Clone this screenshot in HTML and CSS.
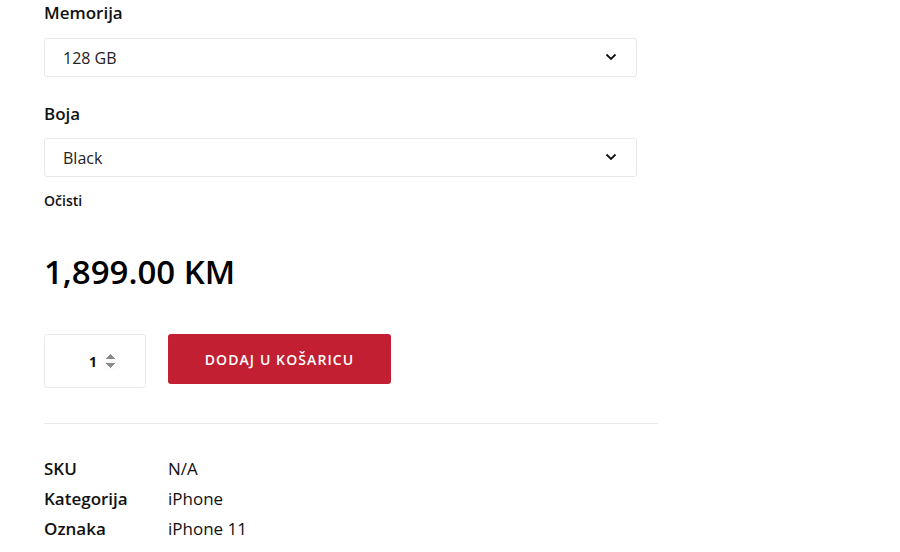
FILE: index.html
```html
<!DOCTYPE html>
<html lang="hr">
<head>
    <meta charset="UTF-8">
    <meta name="viewport" content="width=device-width, initial-scale=1.0">
    <title>iPhone 11</title>
    <link rel="stylesheet" href="styles.css">
</head>
<body>
    <div class="summary">
        <form class="variations-form">
            <div class="variation">
                <label for="memorija">Memorija</label>
                <div class="select-wrap">
                    <select id="memorija">
                        <option>128 GB</option>
                        <option>64 GB</option>
                        <option>256 GB</option>
                    </select>
                    <svg class="chevron" width="12" height="8" viewBox="0 0 12 8"><path d="M1.5 1.5L6 6l4.5-4.5" fill="none" stroke="#111" stroke-width="1.8"/></svg>
                </div>
            </div>
            <div class="variation">
                <label for="boja">Boja</label>
                <div class="select-wrap">
                    <select id="boja">
                        <option>Black</option>
                        <option>White</option>
                        <option>Red</option>
                    </select>
                    <svg class="chevron" width="12" height="8" viewBox="0 0 12 8"><path d="M1.5 1.5L6 6l4.5-4.5" fill="none" stroke="#111" stroke-width="1.8"/></svg>
                </div>
            </div>
            <a href="#" class="reset-link">Očisti</a>

            <div class="price">1,899.00 KM</div>

            <div class="cart-row">
                <div class="qty-box">
                    <input type="number" class="qty" value="1" min="1">
                </div>
                <button type="submit" class="add-to-cart">Dodaj u košaricu</button>
            </div>
        </form>

        <div class="product-meta">
            <div class="meta-row"><span class="meta-label">SKU</span><span>N/A</span></div>
            <div class="meta-row"><span class="meta-label">Kategorija</span><span>iPhone</span></div>
            <div class="meta-row"><span class="meta-label">Oznaka</span><span>iPhone 11</span></div>
        </div>
    </div>
</body>
</html>
```

FILE: styles.css
```css
body {
    font-family: "Open Sans", Arial, sans-serif;
    margin: 0;
    padding: 0;
    background-color: #fff;
    color: #111;
}

.summary {
    width: 614px;
    padding: 0 0 0 44px;
}

.variation label {
    display: block;
    font-size: 17px;
    font-weight: 600;
    line-height: 26px;
    margin: 0 0 12px;
}

.variation + .variation label {
    line-height: 25px;
}

.select-wrap {
    position: relative;
    width: 593px;
    margin-bottom: 24px;
}

.variation + .variation .select-wrap {
    margin-bottom: 12px;
}

select {
    -webkit-appearance: none;
    appearance: none;
    width: 100%;
    height: 39px;
    padding: 0 18px;
    border: 1px solid #e8e8e8;
    border-radius: 3px;
    background-color: #fff;
    font-family: inherit;
    font-size: 16px;
    color: #222;
}

.chevron {
    position: absolute;
    right: 20px;
    top: 15px;
    pointer-events: none;
}

.reset-link {
    display: block;
    font-size: 14px;
    font-weight: 600;
    color: #111;
    text-decoration: none;
    line-height: 24px;
}

.price {
    font-size: 33px;
    font-weight: 600;
    color: #000;
    margin-top: 37px;
    line-height: 44px;
}

.cart-row {
    display: flex;
    gap: 22px;
    margin-top: 40px;
    padding-bottom: 35px;
    border-bottom: 1px solid #eaeaea;
}

.qty-box {
    width: 102px;
    height: 54px;
    border: 1px solid #eaeaea;
    border-radius: 3px;
    box-sizing: border-box;
    display: flex;
    align-items: center;
    padding-left: 31px;
}

.qty {
    width: 42px;
    border: none;
    outline: none;
    font-family: inherit;
    font-size: 14px;
    font-weight: 700;
    text-align: right;
    padding: 0;
    color: #111;
}

.qty::-webkit-inner-spin-button {
    opacity: 1;
    margin-left: 6px;
}

.add-to-cart {
    width: 223px;
    height: 50px;
    background-color: #c21f32;
    color: #fff;
    border: none;
    border-radius: 3px;
    font-family: inherit;
    font-size: 14px;
    font-weight: 600;
    letter-spacing: 1.1px;
    text-transform: uppercase;
    cursor: pointer;
}

.product-meta {
    padding-top: 30px;
}

.meta-row {
    display: flex;
    font-size: 17px;
    line-height: 30px;
}

.meta-label {
    width: 124px;
    font-weight: 600;
}
```
